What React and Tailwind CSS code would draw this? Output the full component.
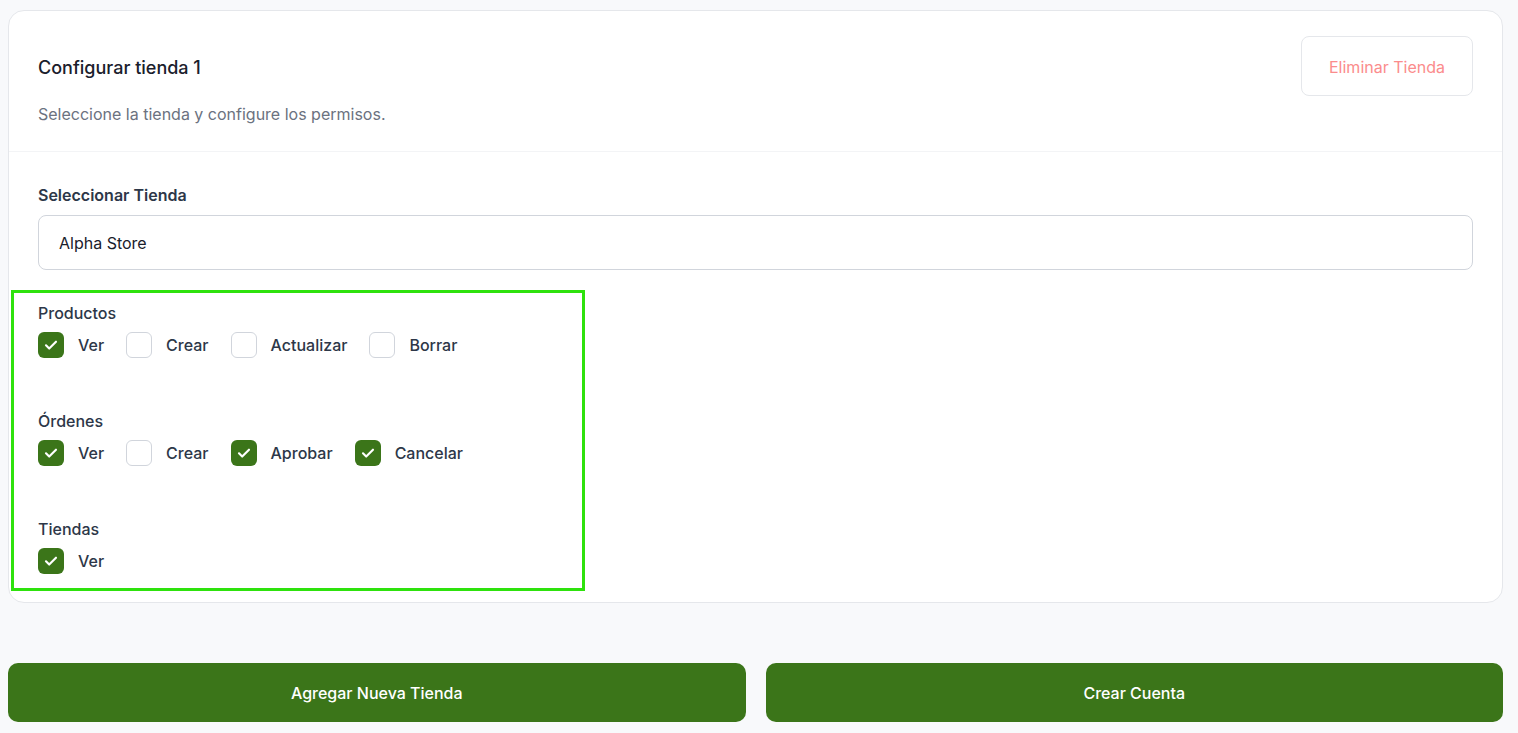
import React, { useState } from 'react'

const font = { fontFamily: 'Inter, "Noto Sans", sans-serif' }

function Check({ label, checked, onChange }) {
  return (
    <label className="flex items-center gap-[14px] cursor-pointer">
      <span
        onClick={onChange}
        className={
          checked
            ? 'w-[26px] h-[26px] rounded-md bg-[#3b7519] flex items-center justify-center'
            : 'w-[26px] h-[26px] rounded-md border border-gray-300 bg-white'
        }
      >
        {checked && (
          <svg width="16" height="16" viewBox="0 0 24 24" fill="none" stroke="white" strokeWidth="3.2" strokeLinecap="round" strokeLinejoin="round">
            <path d="M4.5 12.5l4.8 4.8L19.5 7" />
          </svg>
        )}
      </span>
      <span className="text-[16px] font-medium text-[#2d3748]">{label}</span>
    </label>
  )
}

export default function App() {
  const [perms, setPerms] = useState({
    Productos: { Ver: true, Crear: false, Actualizar: false, Borrar: false },
    'Órdenes': { Ver: true, Crear: false, Aprobar: true, Cancelar: true },
    Tiendas: { Ver: true },
  })

  const toggle = (group, key) =>
    setPerms({ ...perms, [group]: { ...perms[group], [key]: !perms[group][key] } })

  return (
    <div className="min-h-screen bg-[#f8f9fb] pl-2 pr-[15px] pt-[10px]" style={font}>
      {/* Store card */}
      <div className="bg-white border border-gray-200 rounded-2xl">
        <div className="flex justify-between items-start px-[29px] pt-[25px] pb-[25px] border-b border-gray-100">
          <div>
            <h2 className="text-[18px] font-medium text-[#1a202c] mt-[20px] leading-[24px]">Configurar tienda 1</h2>
            <p className="text-[16px] text-[#6b7280] mt-[22px] leading-[24px]">Seleccione la tienda y configure los permisos.</p>
          </div>
          <button className="w-[172px] h-[60px] pt-[2px] rounded-lg border border-gray-200 text-[16px] text-[#fb8c8c]">
            Eliminar Tienda
          </button>
        </div>

        <div className="pt-[31px] pb-[11px]">
          <div className="px-[29px]">
            <label className="block text-[16px] font-semibold text-[#2d3748] leading-[24px]">Seleccionar Tienda</label>
            <div className="mt-[8px] h-[55px] rounded-lg border border-gray-300 flex items-center px-[20px] text-[16px] text-[#1a202c]">
              Alpha Store
            </div>
          </div>

          {/* Permissions */}
          <div className="mt-[20px] ml-[2px] w-[574px] border-[3px] border-[#2ee20d] pl-[24px] pt-[8px] pb-[14px] flex flex-col gap-[51px]">
            {Object.keys(perms).map((group) => (
              <div key={group}>
                <div className="text-[16px] font-medium text-[#2d3748] leading-[24px]">{group}</div>
                <div className="mt-[7px] flex items-center gap-[22px]">
                  {Object.keys(perms[group]).map((k) => (
                    <Check key={k} label={k} checked={perms[group][k]} onChange={() => toggle(group, k)} />
                  ))}
                </div>
              </div>
            ))}
          </div>
        </div>
      </div>

      {/* Actions */}
      <div className="mt-[60px] grid grid-cols-2 gap-[20px]">
        <button className="h-[59px] rounded-[10px] bg-[#3b7519] text-white text-[16px] font-medium">Agregar Nueva Tienda</button>
        <button className="h-[59px] rounded-[10px] bg-[#3b7519] text-white text-[16px] font-medium">Crear Cuenta</button>
      </div>
    </div>
  )
}
